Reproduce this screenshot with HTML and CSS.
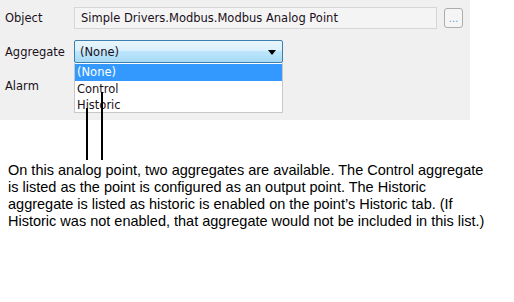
FILE: index.html
```html
<!DOCTYPE html>
<html>
<head>
<meta charset="utf-8">
<link rel="stylesheet" href="styles.css">
</head>
<body>
<div class="panel">
  <div class="row row-object">
    <span class="label">Object</span>
    <div class="field">Simple Drivers.Modbus.Modbus Analog Point</div>
    <div class="browse"><span class="dots">...</span></div>
  </div>
  <div class="row row-agg">
    <span class="label">Aggregate</span>
    <div class="combo">(None)<span class="arrow"></span></div>
  </div>
  <div class="row row-alarm">
    <span class="label">Alarm</span>
  </div>
  <ul class="list">
    <li class="item selected">(None)</li>
    <li class="item">Control</li>
    <li class="item">Historic</li>
  </ul>
  <div class="pointer pointer-historic"></div>
  <div class="pointer pointer-control"></div>
</div>
<p class="note">On this analog point, two aggregates are available. The Control aggregate is listed as the point is configured as an output point. The Historic aggregate is listed as historic is enabled on the point’s Historic tab. (If Historic was not enabled, that aggregate would not be included in this list.)</p>
</body>
</html>
```
FILE: styles.css
```css
html, body {
  margin: 0;
  padding: 0;
  background: #ffffff;
}
body {
  width: 514px;
  height: 302px;
  overflow: hidden;
}
.panel {
  position: relative;
  width: 470px;
  height: 120px;
  background: #f0f0f0;
  box-sizing: border-box;
  padding: 7px 0 0 5px;
  font-family: "DejaVu Sans", sans-serif;
  font-size: 11.5px;
  color: #1a1020;
}
.row {
  display: flex;
  align-items: center;
}
.label {
  width: 69px;
  flex: none;
}
.row-object {
  height: 22px;
}
.row-agg {
  height: 23px;
  margin-top: 11px;
}
.row-alarm {
  height: 22px;
  margin-top: 12px;
}
.field {
  width: 363px;
  height: 22px;
  box-sizing: border-box;
  border: 1px solid #d6d6d6;
  background: #f4f4f4;
  padding-left: 6px;
  display: flex;
  align-items: center;
}
.browse {
  margin-left: 7px;
  width: 19px;
  height: 20px;
  box-sizing: border-box;
  border: 1px solid #adadad;
  border-radius: 3px;
  background: #f5f5f5;
  display: flex;
  align-items: center;
  justify-content: center;
}
.dots {
  color: #6a9fd4;
  font-size: 10px;
  line-height: 1;
  margin-top: 2px;
}
.combo {
  position: relative;
  width: 209px;
  height: 23px;
  box-sizing: border-box;
  border: 1px solid #3c7fb1;
  border-radius: 2px;
  background: linear-gradient(#eaf6fd 0%, #d9f0fc 45%, #bee6fd 50%, #a7d9f5 100%);
  padding-left: 5px;
  display: flex;
  align-items: center;
}
.arrow {
  position: absolute;
  right: 6px;
  top: 9px;
  width: 0;
  height: 0;
  border-left: 4px solid transparent;
  border-right: 4px solid transparent;
  border-top: 5px solid #000000;
}
.list {
  position: absolute;
  left: 74px;
  top: 63px;
  width: 209px;
  height: 50px;
  box-sizing: border-box;
  margin: 0;
  padding: 1px 0 0 0;
  list-style: none;
  background: #ffffff;
  border: 1px solid #c8c8c8;
  border-top: none;
}
.item {
  height: 16px;
  line-height: 16px;
  padding-left: 2px;
}
.item.selected {
  background: #3399ff;
  color: #ffffff;
  height: 17px;
  line-height: 17px;
}
.pointer {
  position: absolute;
  width: 2px;
  background: #000000;
}
.pointer-historic {
  left: 86px;
  top: 108px;
  height: 52px;
}
.pointer-control {
  left: 101px;
  top: 92px;
  height: 68px;
}
.note {
  margin: 42px 0 0 8px;
  width: 482px;
  font-family: "Liberation Sans", Arial, sans-serif;
  font-size: 14.5px;
  line-height: 17px;
  color: #000000;
}
```
